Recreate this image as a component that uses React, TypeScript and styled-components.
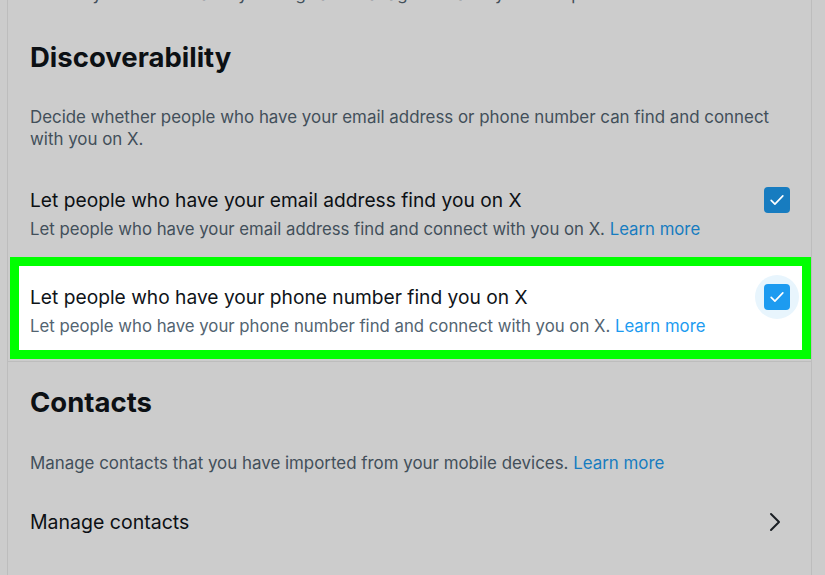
import React from "react";
import styled, { createGlobalStyle } from "styled-components";

const Global = createGlobalStyle`
  html, body { margin: 0; padding: 0; background: #cccccc; overflow: hidden; }
  body { font-family: Inter, "Noto Sans", "Liberation Sans", sans-serif; }
`;

const Panel = styled.div`
  margin-left: 7px;
  width: 803px;
  height: 575px;
  border-left: 1px solid #bdbdbd;
  border-right: 1px solid #bdbdbd;
  display: flex;
  flex-direction: column;
`;

const Intro = styled.p`
  margin: -18px 0 0;
  padding: 0 22px;
  font-size: 16.8px;
  line-height: 24px;
  color: #424f5a;
`;

const Heading = styled.h2`
  margin: 0;
  padding: 0 22px;
  font-size: 27.5px;
  line-height: 36px;
  font-weight: 700;
  color: #0c1014;
`;

const Description = styled.p<{ $top: number }>`
  margin: ${(p) => p.$top}px 0 0;
  padding: 0 22px;
  font-size: 16.9px;
  line-height: 22px;
  color: #424f5a;
`;

const Section = styled.section<{ $top: number }>`
  padding-top: ${(p) => p.$top}px;
  display: flex;
  flex-direction: column;
`;

const Row = styled.div<{ $highlight?: boolean }>`
  display: flex;
  align-items: flex-start;
  justify-content: space-between;
  box-sizing: border-box;
  background: ${(p) => (p.$highlight ? "#ffffff" : "transparent")};
  border: ${(p) => (p.$highlight ? "9px solid #00ff00" : "none")};
  margin-left: ${(p) => (p.$highlight ? "2px" : "0")};
  padding: ${(p) => (p.$highlight ? "19px 3px 0 11px" : "14px 12px 0 22px")};
  height: ${(p) => (p.$highlight ? "102px" : "83px")};
`;

const RowText = styled.div`
  display: flex;
  flex-direction: column;
  gap: 6px;
`;

const RowTitle = styled.div<{ $light?: boolean }>`
  font-size: 19.2px;
  line-height: 24px;
  color: ${(p) => (p.$light ? "#0f1419" : "#0c1014")};
`;

const RowSub = styled.div<{ $light?: boolean }>`
  font-size: 16.75px;
  line-height: 22px;
  color: ${(p) => (p.$light ? "#536471" : "#424f5a")};
`;

const Link = styled.a<{ $light?: boolean }>`
  color: ${(p) => (p.$light ? "#1d9bf0" : "#177cc0")};
  text-decoration: none;
`;

const CheckWrap = styled.div<{ $halo?: boolean }>`
  width: 44px;
  height: 44px;
  margin-top: -10px;
  border-radius: 50%;
  display: flex;
  align-items: center;
  justify-content: center;
  flex-shrink: 0;
  background: ${(p) => (p.$halo ? "#e8f5fd" : "transparent")};
`;

const CheckBox = styled.div<{ $light?: boolean }>`
  width: 26px;
  height: 26px;
  border-radius: 4px;
  background: ${(p) => (p.$light ? "#1d9bf0" : "#177cc0")};
  display: flex;
  align-items: center;
  justify-content: center;
`;

const Separator = styled.div`
  height: 1px;
  background: #bdbdbd;
  margin-top: 2px;
`;

const NavRow = styled.div`
  display: flex;
  align-items: center;
  justify-content: space-between;
  padding: 0 26px 0 22px;
  height: 60px;
  margin-top: 18px;
  font-size: 19.5px;
  color: #0c1014;
`;

const Check = () => (
  <svg width="20" height="20" viewBox="0 0 24 24" fill="none">
    <path d="M5 12.5l4.5 4.5L19 7" stroke="#fff" strokeWidth="2" strokeLinecap="round" strokeLinejoin="round" />
  </svg>
);

const Chevron = () => (
  <svg width="20" height="24" viewBox="0 0 20 24" fill="none">
    <path d="M6 4l8 8-8 8" stroke="#1a1f24" strokeWidth="2" strokeLinecap="round" strokeLinejoin="round" />
  </svg>
);

export default function App() {
  return (
    <>
      <Global />
      <Panel>
        <Intro>Control your discoverability settings and manage contacts you’ve imported.</Intro>
        <Section $top={33}>
          <Heading>Discoverability</Heading>
          <Description $top={31}>
            Decide whether people who have your email address or phone number can find and connect
            with you on X.
          </Description>
        </Section>
        <Section $top={24}>
          <Row>
            <RowText>
              <RowTitle>Let people who have your email address find you on X</RowTitle>
              <RowSub>
                Let people who have your email address find and connect with you on X.{" "}
                <Link>Learn more</Link>
              </RowSub>
            </RowText>
            <CheckWrap>
              <CheckBox>
                <Check />
              </CheckBox>
            </CheckWrap>
          </Row>
          <Row $highlight>
            <RowText>
              <RowTitle $light>Let people who have your phone number find you on X</RowTitle>
              <RowSub $light>
                Let people who have your phone number find and connect with you on X.{" "}
                <Link $light>Learn more</Link>
              </RowSub>
            </RowText>
            <CheckWrap $halo>
              <CheckBox $light>
                <Check />
              </CheckBox>
            </CheckWrap>
          </Row>
          <Separator />
        </Section>
        <Section $top={22}>
          <Heading>Contacts</Heading>
          <Description $top={32}>
            Manage contacts that you have imported from your mobile devices. <Link>Learn more</Link>
          </Description>
          <NavRow>
            <span>Manage contacts</span>
            <Chevron />
          </NavRow>
        </Section>
      </Panel>
    </>
  );
}
